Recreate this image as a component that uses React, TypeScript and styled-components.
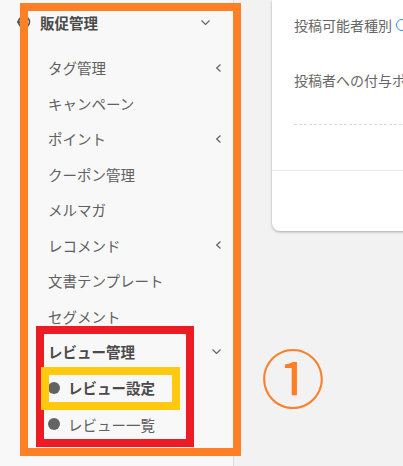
import React from 'react';
import styled, { createGlobalStyle } from 'styled-components';

const GlobalStyle = createGlobalStyle`
    html, body {
        margin: 0;
        padding: 0;
        background: #f2f2f2;
        overflow: hidden;
        font-family: "Noto Sans CJK JP", "Noto Sans", sans-serif;
    }
`;

const Page = styled.div`
    display: flex;
    width: 403px;
    height: 466px;
    overflow: hidden;
`;

const Sidebar = styled.aside`
    flex-shrink: 0;
    width: 233px;
    height: 462px;
    padding-top: 4px;
    background: #f8f8f8;
    border-right: 1px solid #dcdcdc;
`;

/* annotation frames sit over the menu */
const Menu = styled.nav`
    position: relative;
    &::after {
        content: '';
        position: absolute;
        left: 20px;
        right: -8px;
        top: -1px;
        bottom: -13px;
        border: 8px solid #ff7f27;
        z-index: 1;
        pointer-events: none;
    }
`;

const GroupHeader = styled.div`
    display: flex;
    align-items: center;
    gap: 9px;
    height: 36px;
    padding: 0 23px 0 17px;
    font-size: 14.5px;
    font-weight: 700;
    color: #4a4a4a;
`;

const Label = styled.span`
    flex: 1;
    white-space: nowrap;
`;

const SubList = styled.div`
    margin-top: 10px;
`;

const Item = styled.div<{ $bold?: boolean }>`
    display: flex;
    align-items: center;
    height: 35.5px;
    padding: 0 12px 0 48px;
    font-size: 14.5px;
    font-weight: ${(p) => (p.$bold ? 700 : 400)};
    color: ${(p) => (p.$bold ? '#4a4a4a' : '#606060')};
`;

const ReviewGroup = styled.div`
    position: relative;
    &::after {
        content: '';
        position: absolute;
        left: 36px;
        right: 39px;
        top: -8px;
        bottom: -4px;
        border: 8px solid #ed1c24;
        z-index: 1;
        pointer-events: none;
    }
`;

const Leaf = styled.div<{ $active?: boolean }>`
    position: relative;
    display: flex;
    align-items: center;
    gap: 8px;
    height: 36.5px;
    padding-left: 48px;
    font-size: 14.5px;
    font-weight: ${(p) => (p.$active ? 700 : 400)};
    color: ${(p) => (p.$active ? '#4a4a4a' : '#606060')};
    white-space: nowrap;
    ${(p) =>
        p.$active &&
        `
        &::after {
            content: '';
            position: absolute;
            left: 41px;
            right: 53px;
            top: -3px;
            bottom: -4px;
            border: 8px solid #ffc90e;
            z-index: 2;
            pointer-events: none;
        }
    `}
`;

const Bullet = styled.span`
    width: 12px;
    height: 12px;
    border-radius: 50%;
    background: #636363;
    flex-shrink: 0;
`;

const Main = styled.main`
    flex: 1;
    min-width: 0;
    display: flex;
    flex-direction: column;
    padding-left: 27px;
`;

const Card = styled.section`
    margin-left: 11px;
    width: 220px;
    flex-shrink: 0;
    background: #fff;
    border-radius: 0 0 8px 8px;
    box-shadow: 0 1px 3px rgba(0, 0, 0, 0.3);
`;

const CardBody = styled.div`
    padding: 15px 0 0 22px;
    height: 155px;
`;

const Field = styled.div`
    display: flex;
    align-items: center;
    gap: 4px;
    height: 20px;
    margin-bottom: 35px;
    font-size: 14px;
    color: #666;
    white-space: nowrap;
`;

const InfoDot = styled.span`
    width: 10px;
    height: 10px;
    border: 1.5px solid #2d8cf0;
    border-radius: 50%;
    flex-shrink: 0;
`;

const Dashed = styled.div`
    border-top: 1px dashed #dcdcdc;
    margin-top: -1px;
`;

const CardFooter = styled.div`
    height: 60px;
    border-top: 1px solid #e8e8e8;
`;

const Callout = styled.div`
    margin-top: 112px;
    font-size: 64px;
    line-height: 1;
    color: #ff7f27;
`;

const Chevron: React.FC<{ dir: 'down' | 'left' }> = ({ dir }) =>
    dir === 'down' ? (
        <svg width="9" height="5" viewBox="0 0 9 5">
            <polyline points="0.5,0.5 4.5,4.5 8.5,0.5" fill="none" stroke="#666" strokeWidth="1.2" />
        </svg>
    ) : (
        <svg width="5" height="8" viewBox="0 0 5 8">
            <polyline points="4.5,0.5 0.7,4 4.5,7.5" fill="none" stroke="#666" strokeWidth="1.2" />
        </svg>
    );

const GroupIcon = () => (
    <svg width="14" height="14" viewBox="0 0 14 14">
        <circle cx="7" cy="7" r="5.5" fill="none" stroke="#555" strokeWidth="1.6" />
        <circle cx="1.5" cy="7" r="1.5" fill="#555" />
    </svg>
);

const items: { label: string; sub?: boolean }[] = [
    { label: 'タグ管理', sub: true },
    { label: 'キャンペーン' },
    { label: 'ポイント', sub: true },
    { label: 'クーポン管理' },
    { label: 'メルマガ' },
    { label: 'レコメンド', sub: true },
    { label: '文書テンプレート' },
    { label: 'セグメント' },
];

const App: React.FC = () => {
    return (
        <>
            <GlobalStyle />
            <Page>
                <Sidebar>
                    <Menu>
                        <GroupHeader>
                            <GroupIcon />
                            <Label>販促管理</Label>
                            <Chevron dir="down" />
                        </GroupHeader>
                        <SubList>
                            {items.map((it) => (
                                <Item key={it.label}>
                                    <Label>{it.label}</Label>
                                    {it.sub && <Chevron dir="left" />}
                                </Item>
                            ))}
                            <ReviewGroup>
                                <Item $bold>
                                    <Label>レビュー管理</Label>
                                    <Chevron dir="down" />
                                </Item>
                                <Leaf $active>
                                    <Bullet />
                                    レビュー設定
                                </Leaf>
                                <Leaf>
                                    <Bullet />
                                    レビュー一覧
                                </Leaf>
                            </ReviewGroup>
                        </SubList>
                    </Menu>
                </Sidebar>
                <Main>
                    <Card>
                        <CardBody>
                            <Field>
                                投稿可能者種別
                                <InfoDot />
                            </Field>
                            <Field>投稿者への付与ポ</Field>
                            <Dashed />
                        </CardBody>
                        <CardFooter />
                    </Card>
                    <Callout>①</Callout>
                </Main>
            </Page>
        </>
    );
};

export default App;
